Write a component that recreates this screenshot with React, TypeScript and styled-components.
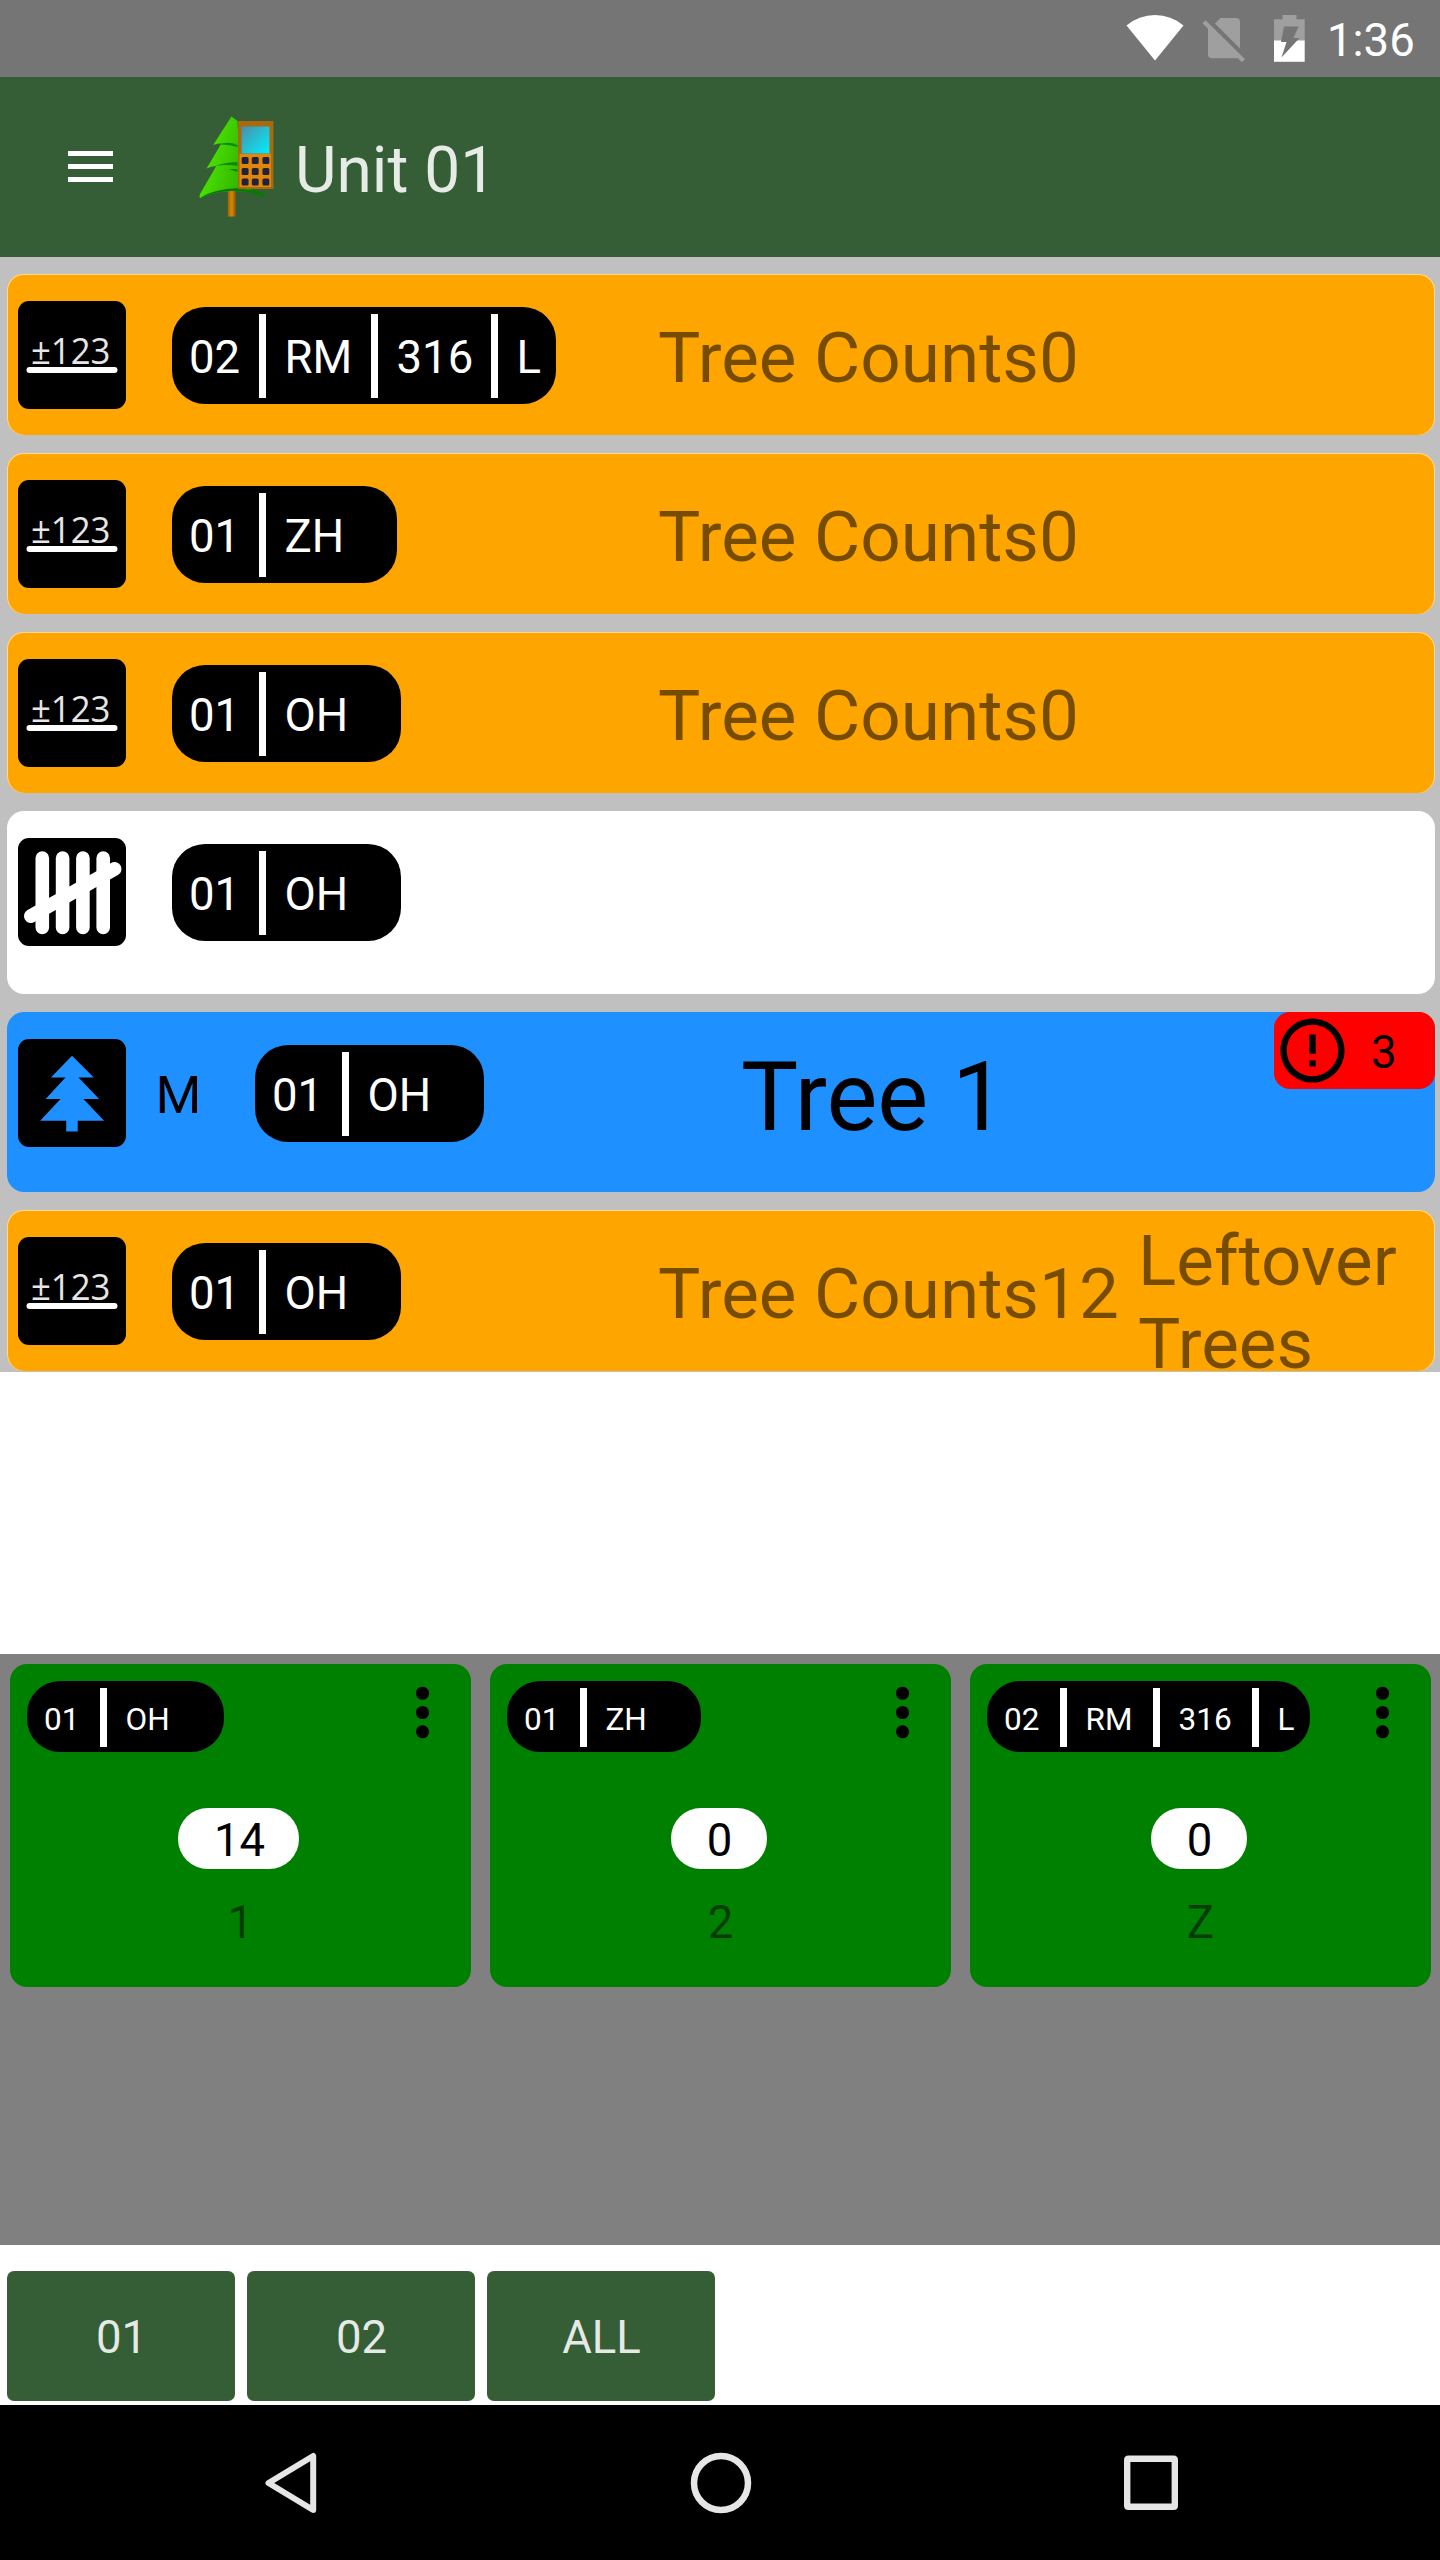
import React from "react";
import styled, { createGlobalStyle } from "styled-components";

const GlobalStyle = createGlobalStyle`
  *, *::before, *::after { box-sizing: border-box; }
  body { margin: 0; background: #fff; }
  svg { display: block; flex: none; }
`;

const Screen = styled.div`
  width: 1440px;
  height: 2560px;
  display: flex;
  flex-direction: column;
  background: #fff;
  font-family: Roboto, "Liberation Sans", sans-serif;
  overflow: hidden;
`;

const StatusBar = styled.div`
  flex: none;
  height: 77px;
  padding: 0 27px 0 0;
  display: flex;
  justify-content: flex-end;
  align-items: flex-start;
  background: #757575;
`;

const StatusIcons = styled.div`
  display: flex;
  padding-top: 14px;
  margin-right: 22px;

  & > :nth-child(2) {
    margin: 0 28px 0 18px;
  }
`;

const Clock = styled.div`
  width: 86px;
  white-space: nowrap;
  padding-top: 14px;
  line-height: 53px;
  font-size: 45.5px;
  color: #fff;
`;

const Header = styled.header`
  flex: none;
  height: 180px;
  display: flex;
  align-items: flex-start;
  background: #355e37;
`;

const MenuButton = styled.div`
  width: 45px;
  margin: 73.5px 85.5px 0 67.5px;
  display: flex;
  flex-direction: column;
  gap: 7.5px;
`;

const MenuLine = styled.span`
  height: 5.6px;
  background: #fff;
`;

const LogoBox = styled.div`
  padding-top: 39px;
  width: 97px;
`;

const Title = styled.h1`
  margin: 0;
  padding-top: 56px;
  font-weight: 400;
  font-size: 64px;
  line-height: 75px;
  color: rgba(255, 255, 255, 0.88);
`;

const TreeList = styled.main`
  flex: none;
  height: 1115px;
  padding: 17px 5px 1px 7px;
  display: flex;
  flex-direction: column;
  gap: 18px;
  background: #c0c0c0;
`;

const Row = styled.section<{ $color: string; $height: number; $edge?: boolean }>`
  position: relative;
  flex: none;
  height: ${(p) => p.$height}px;
  display: flex;
  align-items: flex-start;
  border-radius: 17px;
  background: ${(p) => p.$color};
  box-shadow: ${(p) =>
    p.$edge ? "inset 0 1px #ffd98f, inset 1px 0 #ffd98f, inset -1px 0 #ffd98f" : "none"};
`;

const Lead = styled.div<{ $width: number }>`
  flex: none;
  width: ${(p) => p.$width}px;
  padding-left: 10.5px;
  display: flex;
  align-items: flex-start;
`;

const Tile = styled.div`
  flex: none;
  width: 108px;
  height: 108px;
  margin-top: 26.5px;
  border-radius: 11px;
  background: #000;
`;

const Marker = styled.div<{ $wide: boolean }>`
  flex: none;
  width: ${(p) => (p.$wide ? 129.5 : 46.5)}px;
  padding: 52px 0 0 30px;
  font-size: 52.5px;
  line-height: 62px;
  color: #000;
`;

const PillBox = styled.div<{ $small?: boolean }>`
  flex: none;
  height: ${(p) => (p.$small ? 71 : 97)}px;
  margin-top: ${(p) => (p.$small ? 17 : 33)}px;
  padding-top: 7px;
  border-radius: 33px;
  background: #000;
  color: #fff;
  display: flex;
  font-size: ${(p) => (p.$small ? 31.5 : 45.5)}px;
  line-height: ${(p) => (p.$small ? 63 : 88)}px;
`;

const Segment = styled.span<{ $width: number; $small?: boolean }>`
  width: ${(p) => p.$width}px;
  height: ${(p) => (p.$small ? 59 : 84)}px;
  padding-left: 17px;
  white-space: nowrap;

  & + & {
    border-left: 7px solid #fff;
    padding-left: 18.5px;
  }
`;

const Label = styled.div<{ $big?: boolean }>`
  flex: none;
  white-space: nowrap;
  padding-top: ${(p) => (p.$big ? 28 : 43)}px;
  font-size: ${(p) => (p.$big ? 96 : 71)}px;
  line-height: ${(p) => (p.$big ? 115 : 82)}px;
  color: ${(p) => (p.$big ? "#000" : "rgba(0, 0, 0, 0.54)")};
`;

const Note = styled.div`
  width: 300px;
  margin-left: auto;
  margin-right: -3px;
  padding-top: 9px;
  font-size: 71px;
  line-height: 83px;
  color: rgba(0, 0, 0, 0.54);
`;

const ErrorBadge = styled.div`
  position: absolute;
  top: 0;
  right: 0;
  width: 161px;
  height: 77px;
  border-radius: 16px;
  background: #f00;
  display: flex;
  align-items: flex-start;
  gap: 20px;
  font-size: 45.5px;
  line-height: 82px;
  color: #000;
`;

const Spacer = styled.div`
  flex: none;
  height: 282px;
`;

const TallyPanel = styled.section`
  flex: none;
  height: 591px;
  padding: 10px 9px 0 10px;
  display: flex;
  align-items: flex-start;
  gap: 19px;
  background: #808080;
`;

const TallyCard = styled.article`
  flex: none;
  width: 461px;
  height: 323px;
  border-radius: 17px;
  background: #008000;
  display: flex;
  flex-direction: column;
`;

const CardTop = styled.div`
  height: 144px;
  padding: 0 10px 0 17px;
  display: flex;
  justify-content: space-between;
`;

const MoreBox = styled.div`
  padding-top: 10px;
`;

const Count = styled.div<{ $width: number }>`
  align-self: center;
  width: ${(p) => p.$width}px;
  height: 61px;
  margin-right: 4px;
  padding-left: 2px;
  border-radius: 30px;
  background: #fff;
  text-align: center;
  font-size: 45.5px;
  line-height: 65px;
  color: #000;
`;

const HotKey = styled.div`
  padding-top: 24px;
  text-align: center;
  font-size: 45.5px;
  line-height: 60px;
  color: rgba(0, 0, 0, 0.54);
`;

const StrataBar = styled.footer`
  flex: none;
  height: 160px;
  padding: 26px 7px 4px;
  display: flex;
  gap: 12px;
  background: #fff;
`;

const StratumButton = styled.button`
  width: 228px;
  height: 130px;
  padding: 3px 0 0 1px;
  border: 0;
  border-radius: 7px;
  background: #355e37;
  font-family: inherit;
  font-size: 45.5px;
  color: rgba(255, 255, 255, 0.88);
`;

const NavBar = styled.nav`
  flex: none;
  height: 155px;
  display: flex;
  justify-content: space-between;
  align-items: center;
  padding: 0 258.5px 0 259.5px;
  background: #000;
`;

const WifiIcon = () => (
  <svg width="58" height="48" viewBox="0 0 58 48">
    <path d="M0.5 11.5Q13 1 29 1T57.5 11.5L29 46.5Z" fill="#fff" />
  </svg>
);

const NoSimIcon = () => (
  <svg width="44" height="50" viewBox="0 0 44 50">
    <path d="M13 9.500L18.500 4H34Q38 4 38 8V34.500Z" fill="#9f9f9f" />
    <path d="M6 14V40.300Q6 44.300 10 44.300H34Q36 44.300 37 43Z" fill="#9f9f9f" />
    <path d="M2 7.800L41.500 46.800" stroke="#9f9f9f" strokeWidth="4.400" fill="none" />
  </svg>
);

const BatteryIcon = () => (
  <svg width="31" height="48" viewBox="0 0 31 48">
    <path d="M8.500 1H22.500V5.200H30.700V26.400H0V5.200H8.500Z" fill="#9f9f9f" />
    <path d="M0 26.400H30.700V47.800H0Z" fill="#fff" />
    <path d="M10 12.500H24.500L19.500 24H25.500L7.500 43.500L12.500 28H7Z" fill="#757575" />
  </svg>
);

const LogoIcon = () => (
  <svg width="77" height="102" viewBox="18 17 76 102" preserveAspectRatio="none">
    <defs>
      <linearGradient id="leaf" x1="0" y1="0" x2="1" y2="0.3">
        <stop offset="0.2" stopColor="#4be600" />
        <stop offset="0.75" stopColor="#36b800" />
        <stop offset="1" stopColor="#087a04" />
      </linearGradient>
      <linearGradient id="glass" x1="0" y1="0" x2="1" y2="1">
        <stop offset="0" stopColor="#4a90a8" />
        <stop offset="1" stopColor="#00f0ff" />
      </linearGradient>
      <linearGradient id="trunk" x1="0" y1="0" x2="1" y2="0">
        <stop offset="0" stopColor="#a86400" />
        <stop offset="0.5" stopColor="#d88a00" />
        <stop offset="1" stopColor="#7d4d08" />
      </linearGradient>
    </defs>
    <path d="M47.500 90H55.500V117.500H47.500Z" fill="url(#trunk)" />
    <path
      d="M51 17.500L57 22L60 88L72 90L84 95L83 98Q67 91 50 92Q33 93 20 99Q19 98 20 95L36 67Q31 67 26.500 69.500L41 44.500Q37 44 33 46Z"
      fill="url(#leaf)"
    />
    <path d="M20 99Q33 90 58 89L84 95L83 98Q67 91 50 92Q33 93 20 99Z" fill="#067a06" />
    <path d="M38 45.500Q48 42 57 46L57 48Q48 45 38 45.500ZM35 67Q46 63 57 63V67Q46 65 35 67ZM48 70L57 70V73Z" fill="#0c8c06" />
    <path d="M57.500 22H92.500V90H57.500Z" fill="#a8690f" />
    <path d="M59 55H90V88H59Z" fill="#e0860c" />
    <path d="M61 27.500H88.500V54.500H61Z" fill="url(#glass)" />
    {[61.500, 72.500, 83].map((cy) =>
      [64.500, 74.500, 85].map((cx) => (
        <rect key={`${cx}-${cy}`} x={cx - 3.400} y={cy - 3.400} width="6.800" height="6.800" rx="1.500" fill="#1f2238" />
      ))
    )}
  </svg>
);

const CountIcon = () => (
  <svg width="108" height="108" viewBox="0 0 108 108">
    <text
      x="13"
      y="62.500"
      fontFamily="'Open Sans', 'Noto Sans', sans-serif"
      fontSize="36"
      textLength="79.500"
      lengthAdjust="spacingAndGlyphs"
      fill="#e6e6e6"
    >
      ±123
    </text>
    <path d="M11.500 69H96.500" stroke="#fff" strokeWidth="6" strokeLinecap="round" />
  </svg>
);

const TallyIcon = () => (
  <svg width="108" height="108" viewBox="0 0 108 108" stroke="#fff" strokeLinecap="round">
    <path d="M24.300 20V89.500M44.600 20V89.500M64.900 20V89.500M85.200 20V89.500" strokeWidth="13.600" />
    <path d="M13 78L96.500 31" strokeWidth="14" />
  </svg>
);

const TreeIcon = () => (
  <svg width="108" height="108" viewBox="0 0 108 108">
    <path
      d="M54 16.700L75.800 38.400H60.500L81.100 60H65.400L86.100 81.700H59.700V92.400H48.200V81.700H22.200L42.500 60H27.600L47.500 38.400H32.900Z"
      fill="#1e90ff"
    />
  </svg>
);

const ErrorIcon = () => (
  <svg width="77" height="77" viewBox="0 0 24 24">
    <path d="M11 15h2v2h-2zm0-8h2v6h-2zm.99-5C6.470 2 2 6.480 2 12s4.470 10 9.990 10C17.520 22 22 17.520 22 12S17.520 2 11.990 2zM12 20c-4.420 0-8-3.580-8-8s3.580-8 8-8 8 3.580 8 8-3.580 8-8 8z" />
  </svg>
);

const MoreIcon = () => (
  <svg width="77" height="77" viewBox="0 0 24 24">
    <circle cx="12" cy="6" r="2.050" />
    <circle cx="12" cy="12" r="2.050" />
    <circle cx="12" cy="18" r="2.050" />
  </svg>
);

const tileIcons = { count: CountIcon, tally: TallyIcon, tree: TreeIcon };

type Part = [text: string, width: number];

const Pill = ({ parts, small }: { parts: Part[]; small?: boolean }) => (
  <PillBox $small={small}>
    {parts.map(([text, width]) => (
      <Segment key={text} $width={width} $small={small}>
        {text}
      </Segment>
    ))}
  </PillBox>
);

type Entry = {
  icon: keyof typeof tileIcons;
  color: string;
  height: number;
  parts: Part[];
  marker?: string;
  label?: string;
  big?: boolean;
  note?: string;
  errors?: number;
};

const ORANGE = "#ffa500";
const ohParts: Part[] = [["01", 87], ["OH", 142]];

const entries: Entry[] = [
  {
    icon: "count",
    color: ORANGE,
    height: 161,
    parts: [["02", 87], ["RM", 112], ["316", 120], ["L", 65]],
    label: "Tree Counts0",
  },
  { icon: "count", color: ORANGE, height: 161, parts: [["01", 87], ["ZH", 138]], label: "Tree Counts0" },
  { icon: "count", color: ORANGE, height: 161, parts: ohParts, label: "Tree Counts0" },
  { icon: "tally", color: "#fff", height: 183, parts: ohParts },
  { icon: "tree", color: "#1e90ff", height: 180, parts: ohParts, marker: "M", label: "Tree 1", big: true, errors: 3 },
  { icon: "count", color: ORANGE, height: 161, parts: ohParts, label: "Tree Counts12", note: "Leftover Trees" },
];

const tallies: { parts: Part[]; count: number; width: number; hotKey: string }[] = [
  { parts: [["01", 73], ["OH", 124]], count: 14, width: 121, hotKey: "1" },
  { parts: [["01", 73], ["ZH", 121]], count: 0, width: 96, hotKey: "2" },
  { parts: [["02", 73], ["RM", 93], ["316", 99], ["L", 58]], count: 0, width: 96, hotKey: "Z" },
];

export default function App() {
  return (
    <Screen>
      <GlobalStyle />
      <StatusBar>
        <StatusIcons>
          <WifiIcon />
          <NoSimIcon />
          <BatteryIcon />
        </StatusIcons>
        <Clock>1:36</Clock>
      </StatusBar>
      <Header>
        <MenuButton>
          <MenuLine />
          <MenuLine />
          <MenuLine />
        </MenuButton>
        <LogoBox>
          <LogoIcon />
        </LogoBox>
        <Title>Unit 01</Title>
      </Header>
      <TreeList>
        {entries.map((entry, i) => {
          const Icon = tileIcons[entry.icon];
          return (
            <Row key={i} $color={entry.color} $height={entry.height} $edge={entry.color === ORANGE}>
              <Lead $width={entry.big ? 734 : 651}>
                <Tile>
                  <Icon />
                </Tile>
                <Marker $wide={!!entry.marker}>{entry.marker}</Marker>
                <Pill parts={entry.parts} />
              </Lead>
              {entry.label && <Label $big={entry.big}>{entry.label}</Label>}
              {entry.note && <Note>{entry.note}</Note>}
              {entry.errors && (
                <ErrorBadge>
                  <ErrorIcon />
                  {entry.errors}
                </ErrorBadge>
              )}
            </Row>
          );
        })}
      </TreeList>
      <Spacer />
      <TallyPanel>
        {tallies.map((tally) => (
          <TallyCard key={tally.hotKey}>
            <CardTop>
              <Pill parts={tally.parts} small />
              <MoreBox>
                <MoreIcon />
              </MoreBox>
            </CardTop>
            <Count $width={tally.width}>{tally.count}</Count>
            <HotKey>{tally.hotKey}</HotKey>
          </TallyCard>
        ))}
      </TallyPanel>
      <StrataBar>
        <StratumButton>01</StratumButton>
        <StratumButton>02</StratumButton>
        <StratumButton>ALL</StratumButton>
      </StrataBar>
      <NavBar>
        <svg width="62" height="62" viewBox="0 0 62 62" fill="none" stroke="#e6e6e6" strokeWidth="6" strokeLinejoin="round">
          <path d="M53.200 4V58L8.500 31Z" />
        </svg>
        <svg width="62" height="62" viewBox="0 0 62 62" fill="none" stroke="#e6e6e6" strokeWidth="6.500">
          <circle cx="31" cy="31" r="27" />
        </svg>
        <svg width="62" height="62" viewBox="0 0 62 62">
          <path
            d="M8.500 3.500H53.500Q58 3.500 58 8V53.500Q58 58 53.500 58H8.500Q4 58 4 53.500V8Q4 3.500 8.500 3.500ZM10.400 10V51.500H51.600V10Z"
            fill="#e6e6e6"
            fillRule="evenodd"
          />
        </svg>
      </NavBar>
    </Screen>
  );
}
